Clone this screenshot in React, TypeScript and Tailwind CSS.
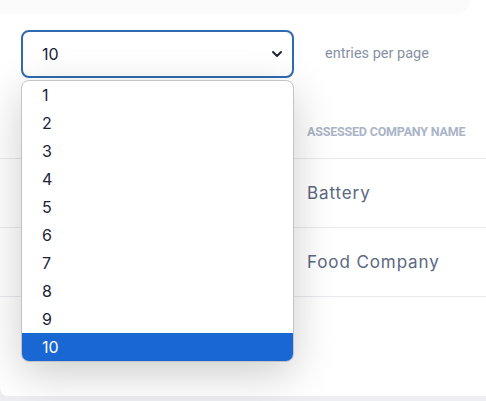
import { ChevronDown } from "lucide-react";

const options = ["1", "2", "3", "4", "5", "6", "7", "8", "9", "10"];

const rows = [
  { id: 1, name: "Battery" },
  { id: 2, name: "Food Company" },
];

export default function App() {
  return (
    <div className="w-[486px] h-[401px] bg-[#eceef1] overflow-hidden">
      <div className="relative h-[396px] bg-white rounded-bl-lg">
        {/* faint edge of the card above */}
        <div className="h-[14px] w-[470px] bg-[#fbfbfb] rounded-br-[40px]" />

        {/* entries per page */}
        <div className="flex items-center pl-[21px] mt-[16px]">
          <div className="flex items-center justify-between w-[273px] h-[48px] border-2 border-[#2f6ab0] rounded-lg pl-[19px] pr-[7px] bg-white">
            <span className="text-[16px] text-[#1c2237] font-['Inter',sans-serif]">10</span>
            <ChevronDown className="w-4 h-4 text-[#23263a]" strokeWidth={3} />
          </div>
          <span className="ml-[31px] text-[14.5px] text-[#8791a5] font-['Roboto',sans-serif]">entries per page</span>
        </div>

        {/* table */}
        <div className="mt-[23px]">
          <div className="h-[58px] flex items-center pl-[307px] pt-[6px] border-b border-[#e7e9ed]">
            <span className="text-[12.5px] font-bold text-[#a9b4c6] uppercase tracking-[-0.2px] font-['Roboto',sans-serif]">
              Assessed Company Name
            </span>
          </div>
          {rows.map((row) => (
            <div key={row.id} className="h-[69px] flex items-center pl-[307px] pt-[2px] border-b border-[#e7e9ed]">
              <span className="text-[17px] tracking-[0.9px] text-[#5a6882] font-['Inter',sans-serif]">{row.name}</span>
            </div>
          ))}
        </div>

        {/* open select list */}
        <div className="absolute left-[21px] top-[80px] w-[273px] rounded-lg border border-[#c4c4c4] bg-white overflow-hidden shadow-[0_12px_44px_rgba(0,0,0,0.2)]">
          {options.map((opt) => (
            <div
              key={opt}
              className={
                opt === "10"
                  ? "h-[28px] flex items-center pl-[20px] bg-[#1967d2] text-white text-[16px] font-['Inter',sans-serif]"
                  : "h-[28px] flex items-center pl-[20px] text-[#1c2237] text-[16px] font-['Inter',sans-serif]"
              }
            >
              {opt}
            </div>
          ))}
        </div>
      </div>
    </div>
  );
}
